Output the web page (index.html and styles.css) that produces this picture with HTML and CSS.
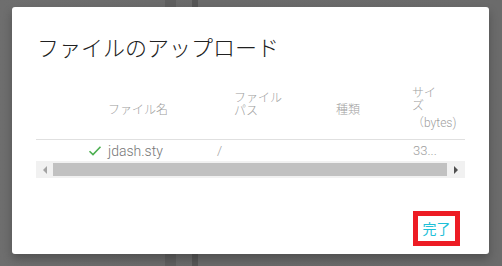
FILE: index.html
```html
<!DOCTYPE html>
<html lang="ja">
<head>
<meta charset="utf-8">
<link rel="stylesheet" href="styles.css">
</head>
<body>
<div class="dialog">
  <h1 class="title">ファイルのアップロード</h1>
  <div class="table">
    <div class="row head">
      <div class="c c1"><span class="h1t">ファイル名</span></div>
      <div class="c c2"><span class="h2t">ファイル<br>パス</span></div>
      <div class="c c3"><span class="h3t">種類</span></div>
      <div class="c c4"><span class="h4t">サイ<br>ズ<br><span class="unit">（bytes)</span></span></div>
    </div>
    <div class="row data">
      <div class="c c1 d1">
        <svg class="check" width="14" height="12" viewBox="0 0 14 12"><path d="M1.5 6.2 L5 9.6 L12.5 1.8" fill="none" stroke="#4caf50" stroke-width="1.6"/></svg>
        <span>jdash.sty</span>
      </div>
      <div class="c c2 d2">/</div>
      <div class="c c3"></div>
      <div class="c c4 d4">33...</div>
    </div>
    <div class="scrollbar">
      <div class="sbtn left"><span class="tri-l"></span></div>
      <div class="thumb"></div>
      <div class="sbtn right"><span class="tri-r"></span></div>
    </div>
  </div>
  <div class="actions">
    <button class="done">完了</button>
  </div>
</div>
</body>
</html>
```

FILE: styles.css
```css
html, body {
  margin: 0;
  padding: 0;
}
body {
  width: 502px;
  height: 266px;
  overflow: hidden;
  background:
    linear-gradient(to right,
      transparent 0, transparent 165px,
      #5f5f5f 165px, #5f5f5f 176px,
      transparent 176px, transparent 192px,
      #565656 192px, #565656 198px,
      transparent 198px),
    linear-gradient(to right, #6e6e6e, #6a6a6a 40%, #6b6b6b);
  font-family: Roboto, "Noto Sans CJK JP", sans-serif;
  padding-top: 7px;
  box-sizing: border-box;
}
.dialog {
  margin-left: 12px;
  width: 477px;
  height: 247px;
  background: #fff;
  border-radius: 3px;
  box-shadow: 0 5px 10px rgba(0,0,0,0.25);
  box-sizing: border-box;
  padding-top: 26px;
  display: flex;
  flex-direction: column;
}
.title {
  margin: 0 0 0 25px;
  font-family: "Noto Sans CJK JP", sans-serif;
  font-weight: 300;
  font-size: 22px;
  line-height: 26px;
  color: #212121;
}
.table {
  margin: 26px 0 0 24px;
  width: 429px;
}
.row {
  display: flex;
}
.head {
  height: 54px;
  border-bottom: 1px solid #e0e0e0;
  align-items: center;
  font-size: 12px;
  color: #a0a0a0;
  font-weight: 300;
  font-family: Roboto, "Noto Sans CJK JP", sans-serif;
}
.c1 { width: 174px; }
.c2 { width: 100px; }
.c3 { width: 90px; }
.c4 { width: 65px; }
.head .c1 { padding-left: 72px; box-sizing: border-box; }
.head .c2 { padding-left: 24px; box-sizing: border-box; }
.head .c3 { padding-left: 26px; box-sizing: border-box; }
.head .c4 { padding-left: 12px; box-sizing: border-box; }
.h1t, .h3t { display: block; line-height: 14px; margin-top: -4px; }
.h2t { display: block; line-height: 13px; margin-top: -15px; }
.h4t { display: block; line-height: 13px; margin-top: -8px; }
.unit { display: inline-block; margin-top: 4px; }
.data {
  height: 21px;
  align-items: center;
  font-size: 14px;
  font-weight: 300;
  color: #757575;
}
.d1 {
  display: flex;
  align-items: center;
  padding-left: 52px;
  box-sizing: border-box;
}
.check { margin-right: 6px; }
.d2 { padding-left: 7px; box-sizing: border-box; color: #9e9e9e; font-size: 13px; }
.d4 { padding-left: 13px; box-sizing: border-box; color: #9e9e9e; font-size: 13px; }
.scrollbar {
  height: 17px;
  background: #f1f1f1;
  display: flex;
  align-items: center;
}
.sbtn {
  height: 17px;
  display: flex;
  align-items: center;
  justify-content: center;
}
.left { width: 17px; }
.right { width: 18px; }
.thumb {
  flex: 1;
  height: 13px;
  background: #c1c1c1;
}
.tri-l {
  width: 0; height: 0;
  border-top: 4px solid transparent;
  border-bottom: 4px solid transparent;
  border-right: 4px solid #a3a3a3;
}
.tri-r {
  width: 0; height: 0;
  border-top: 4px solid transparent;
  border-bottom: 4px solid transparent;
  border-left: 4px solid #505050;
}
.actions {
  margin-top: auto;
  margin-bottom: 8px;
  display: flex;
  justify-content: flex-end;
  padding-right: 29px;
}
.done {
  border: 5px solid #ed1c24;
  background: #fff;
  color: #1fc0d8;
  font-family: "Noto Sans CJK JP", sans-serif;
  font-size: 14px;
  line-height: 25px;
  height: 35px;
  width: 47px;
  padding: 0;
  margin: 0;
  box-sizing: border-box;
}
```
